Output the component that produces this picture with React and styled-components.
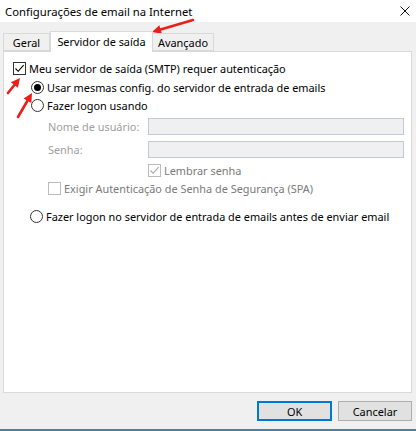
import React from 'react';
import styled, { createGlobalStyle } from 'styled-components';

const GlobalStyle = createGlobalStyle`
  html, body {
    margin: 0;
    padding: 0;
    background: #f0f0f0;
  }
  body {
    font-family: "Noto Sans", "Open Sans", sans-serif;
    font-size: 10.9px;
    color: #000;
  }
`;

const Window = styled.div`
  position: relative;
  width: 416px;
  height: 431px;
  background: #f0f0f0;
  display: flex;
  flex-direction: column;
  overflow: hidden;
`;

const TitleBar = styled.div`
  height: 22px;
  background: #fff;
  display: flex;
  align-items: center;
  justify-content: space-between;
  padding: 0 6px 0 5px;
  font-size: 11.3px;
  color: #000;
`;

const Body = styled.div`
  padding: 9px 4px 0 3px;
  display: flex;
  flex-direction: column;
`;

const TabStrip = styled.div`
  display: flex;
  align-items: flex-end;
  height: 20px;
`;

const Tab = styled.div`
  position: relative;
  box-sizing: border-box;
  width: ${p => p.$w}px;
  height: ${p => (p.$active ? 21 : 18)}px;
  margin-bottom: ${p => (p.$active ? -1 : 0)}px;
  background: ${p => (p.$active ? '#fff' : '#f0f0f0')};
  border: 1px solid #d9d9d9;
  border-bottom: ${p => (p.$active ? 'none' : '1px solid #d9d9d9')};
  border-left: ${p => (p.$first || p.$active ? '1px solid #d9d9d9' : 'none')};
  z-index: ${p => (p.$active ? 2 : 1)};
  display: flex;
  align-items: center;
  justify-content: center;
  padding-bottom: ${p => (p.$active ? 2 : 0)}px;
`;

const Panel = styled.div`
  position: relative;
  box-sizing: border-box;
  height: 342px;
  background: #fff;
  border: 1px solid #d9d9d9;
  padding: 7px 0 0 9px;
  display: flex;
  flex-direction: column;
`;

const Row = styled.div`
  display: flex;
  align-items: center;
  height: ${p => p.$h || 18}px;
  margin-top: ${p => p.$mt || 0}px;
  margin-left: ${p => p.$indent || 0}px;
  color: ${p => p.$color || '#000'};
  white-space: nowrap;
`;

const Box = styled.span`
  box-sizing: border-box;
  width: 13px;
  height: 13px;
  border: 1px solid ${p => (p.$disabled ? '#bcbcbc' : '#333')};
  background: #fff;
  margin-right: 3px;
  display: flex;
  align-items: center;
  justify-content: center;
  flex: none;
`;

const Radio = styled.span`
  box-sizing: border-box;
  width: 13px;
  height: 13px;
  border-radius: 50%;
  border: 1px solid #333;
  background: #fff;
  margin-right: 3px;
  display: flex;
  align-items: center;
  justify-content: center;
  flex: none;

  &::after {
    content: '';
    display: ${p => (p.$checked ? 'block' : 'none')};
    width: 7px;
    height: 7px;
    border-radius: 50%;
    background: #000;
  }
`;

const FieldLabel = styled.span`
  width: 100px;
  color: #a0a0a0;
`;

const Input = styled.div`
  box-sizing: border-box;
  width: 256px;
  height: 17px;
  background: #f0f0f0;
  border: 1px solid #c2cad6;
`;

const ButtonRow = styled.div`
  display: flex;
  justify-content: flex-end;
  gap: 6px;
  padding: 8px 4px 0 0;
  height: 20px;
`;

const Button = styled.div`
  box-sizing: border-box;
  width: ${p => p.$w}px;
  height: 20px;
  background: #e1e1e1;
  border: ${p => (p.$primary ? '2px solid #0078d7' : '1px solid #adadad')};
  display: flex;
  align-items: center;
  justify-content: center;
`;

const BottomLine = styled.div`
  position: absolute;
  left: 0;
  right: 0;
  bottom: 0;
  height: 2px;
  background: #3d86b3;
`;

const Overlay = styled.svg`
  position: absolute;
  left: 0;
  top: 0;
  pointer-events: none;
`;

const Check = ({ color = '#000' }) => (
  <svg width="11" height="11" viewBox="0 0 11 11">
    <path d="M1.5 5.5 L4.2 8.3 L9.6 2.2" fill="none" stroke={color} strokeWidth="1.1" />
  </svg>
);

function Arrow({ x1, y1, x2, y2 }) {
  const a = Math.atan2(y2 - y1, x2 - x1);
  const L = 9;
  const W = 4.5;
  const bx = x2 - L * Math.cos(a);
  const by = y2 - L * Math.sin(a);
  const px = -Math.sin(a) * W;
  const py = Math.cos(a) * W;
  return (
    <g>
      <line x1={x1} y1={y1} x2={bx} y2={by} stroke="#e8201c" strokeWidth="2.6" strokeLinecap="round" />
      <polygon points={`${x2},${y2} ${bx + px},${by + py} ${bx - px},${by - py}`} fill="#e8201c" />
    </g>
  );
}

export default function App() {
  return (
    <>
      <GlobalStyle />
      <Window>
        <TitleBar>
          <span>Configurações de email na Internet</span>
          <svg width="10" height="10" viewBox="0 0 10 10">
            <path d="M0.5 0.5 L9.5 9.5 M9.5 0.5 L0.5 9.5" stroke="#111" strokeWidth="1" />
          </svg>
        </TitleBar>
        <Body>
          <TabStrip>
            <Tab $w={47} $first>Geral</Tab>
            <Tab $w={103} $active>Servidor de saída</Tab>
            <Tab $w={61}>Avançado</Tab>
          </TabStrip>
          <Panel>
            <Row>
              <Box><Check /></Box>
              Meu servidor de saída (SMTP) requer autenticação
            </Row>
            <Row $mt={1} $indent={18}>
              <Radio $checked />
              Usar mesmas config. do servidor de entrada de emails
            </Row>
            <Row $indent={18}>
              <Radio />
              Fazer logon usando
            </Row>
            <Row $mt={3} $indent={35}>
              <FieldLabel>Nome de usuário:</FieldLabel>
              <Input />
            </Row>
            <Row $mt={5} $indent={35}>
              <FieldLabel>Senha:</FieldLabel>
              <Input />
            </Row>
            <Row $mt={3} $indent={135} $color="#7a7a7a">
              <Box $disabled><Check color="#a8a8a8" /></Box>
              Lembrar senha
            </Row>
            <Row $indent={35} $color="#7a7a7a">
              <Box $disabled />
              Exigir Autenticação de Senha de Segurança (SPA)
            </Row>
            <Row $mt={10} $indent={17}>
              <Radio />
              Fazer logon no servidor de entrada de emails antes de enviar email
            </Row>
          </Panel>
        </Body>
        <ButtonRow>
          <Button $w={75} $primary>OK</Button>
          <Button $w={74}>Cancelar</Button>
        </ButtonRow>
        <BottomLine />
        <Overlay width="416" height="431">
          <Arrow x1={193} y1={20} x2={152} y2={32} />
          <Arrow x1={8} y1={93} x2={20} y2={78} />
          <Arrow x1={18} y1={117} x2={32} y2={93} />
        </Overlay>
      </Window>
    </>
  );
}
